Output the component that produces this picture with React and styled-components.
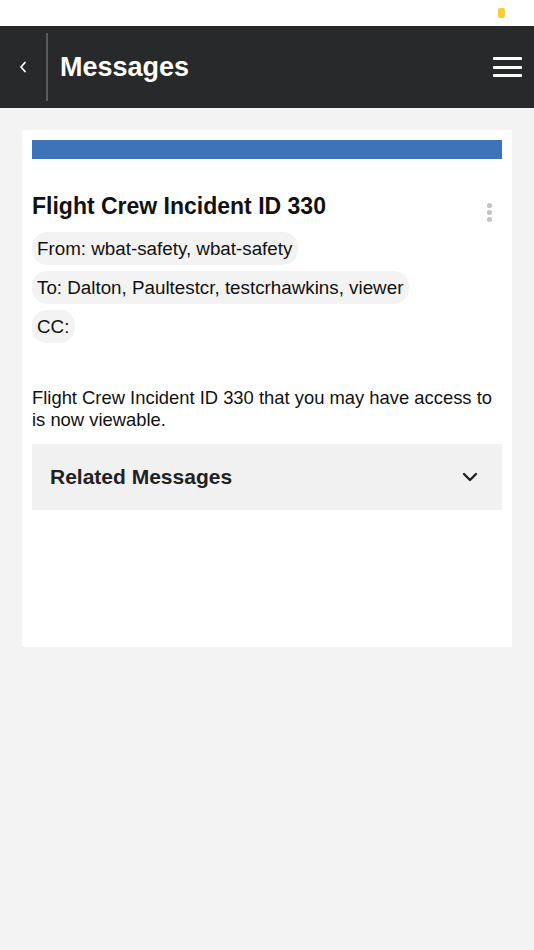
import React from 'react'
import styled, { createGlobalStyle } from 'styled-components'

const GlobalStyle = createGlobalStyle`
  html, body {
    margin: 0;
    padding: 0;
    background: #f3f3f3;
    font-family: "Liberation Sans", Arial, sans-serif;
    color: #111;
  }
`

const Page = styled.div`
  min-height: 950px;
  background: #f3f3f3;
`

const StatusBar = styled.div`
  height: 26px;
  background: #fff;
  display: flex;
  justify-content: flex-end;
  align-items: flex-start;
  padding-right: 29px;
`

const Battery = styled.span`
  width: 7px;
  height: 10px;
  margin-top: 8px;
  border-radius: 2px;
  background: #f5cf3a;
`

const Header = styled.header`
  height: 82px;
  background: #28292b;
  display: flex;
  align-items: center;
  color: #fff;
`

const BackButton = styled.button`
  width: 46px;
  height: 68px;
  border: 0;
  background: transparent;
  color: #fff;
  display: flex;
  align-items: center;
  justify-content: center;
  padding: 0;
`

const Divider = styled.div`
  width: 2px;
  height: 68px;
  background: #5a5b5d;
`

const HeaderTitle = styled.h1`
  flex: 1;
  margin: 0 0 0 12px;
  font-size: 27px;
  font-weight: 700;
`

const MenuButton = styled.button`
  border: 0;
  background: transparent;
  padding: 0;
  margin-right: 12px;
  width: 29px;
  height: 20px;
  display: flex;
  flex-direction: column;
  justify-content: space-between;
`

const MenuLine = styled.span`
  display: block;
  height: 3px;
  border-radius: 1px;
  background: #fff;
`

const Content = styled.main`
  padding: 22px 22px 0;
`

const Card = styled.section`
  background: #fff;
  padding: 10px 10px 0;
  height: 507px;
`

const ColorBar = styled.div`
  height: 19px;
  background: #3d74b9;
`

const TitleRow = styled.div`
  display: flex;
  align-items: flex-start;
  justify-content: space-between;
  margin-top: 33px;
`

const MessageTitle = styled.h2`
  margin: 0;
  font-size: 23px;
  line-height: 28px;
  font-weight: 700;
`

const Kebab = styled.button`
  border: 0;
  background: transparent;
  padding: 0;
  margin: 11px 10px 0 0;
  display: flex;
  flex-direction: column;
  gap: 2px;
`

const Dot = styled.span`
  width: 5px;
  height: 5px;
  border-radius: 50%;
  background: #c2c2c2;
`

const Chips = styled.div`
  display: flex;
  flex-direction: column;
  align-items: flex-start;
  gap: 6px;
  margin-top: 10px;
`

const Chip = styled.div`
  height: 33px;
  line-height: 33px;
  padding: 0 6px 0 5px;
  border-radius: 15px;
  background: #f3f3f3;
  font-size: 18.8px;
  color: #111;
`

const Body = styled.p`
  margin: 44px 0 0;
  font-size: 18.4px;
  line-height: 22px;
`

const Accordion = styled.div`
  margin-top: 13px;
  height: 66px;
  background: #f1f1f1;
  display: flex;
  align-items: center;
  justify-content: space-between;
  padding: 0 24px 0 18px;
`

const AccordionTitle = styled.span`
  font-size: 21px;
  font-weight: 700;
  color: #222;
`

export default function App() {
  return (
    <Page>
      <GlobalStyle />
      <StatusBar>
        <Battery />
      </StatusBar>
      <Header>
        <BackButton aria-label="Back">
          <svg width="8" height="12" viewBox="0 0 8 12" fill="none">
            <path d="M6 1.5L2 6l4 4.5" stroke="#fff" strokeWidth="1.8" strokeLinecap="round" strokeLinejoin="round" />
          </svg>
        </BackButton>
        <Divider />
        <HeaderTitle>Messages</HeaderTitle>
        <MenuButton aria-label="Menu">
          <MenuLine />
          <MenuLine />
          <MenuLine />
        </MenuButton>
      </Header>
      <Content>
        <Card>
          <ColorBar />
          <TitleRow>
            <MessageTitle>Flight Crew Incident ID 330</MessageTitle>
            <Kebab aria-label="More">
              <Dot />
              <Dot />
              <Dot />
            </Kebab>
          </TitleRow>
          <Chips>
            <Chip>From: wbat-safety, wbat-safety</Chip>
            <Chip>To: Dalton, Paultestcr, testcrhawkins, viewer</Chip>
            <Chip>CC:</Chip>
          </Chips>
          <Body>Flight Crew Incident ID 330 that you may have access to is now viewable.</Body>
          <Accordion>
            <AccordionTitle>Related Messages</AccordionTitle>
            <svg width="16" height="10" viewBox="0 0 16 10" fill="none">
              <path d="M2 2l6 6 6-6" stroke="#222" strokeWidth="2.4" strokeLinecap="round" strokeLinejoin="round" />
            </svg>
          </Accordion>
        </Card>
      </Content>
    </Page>
  )
}
